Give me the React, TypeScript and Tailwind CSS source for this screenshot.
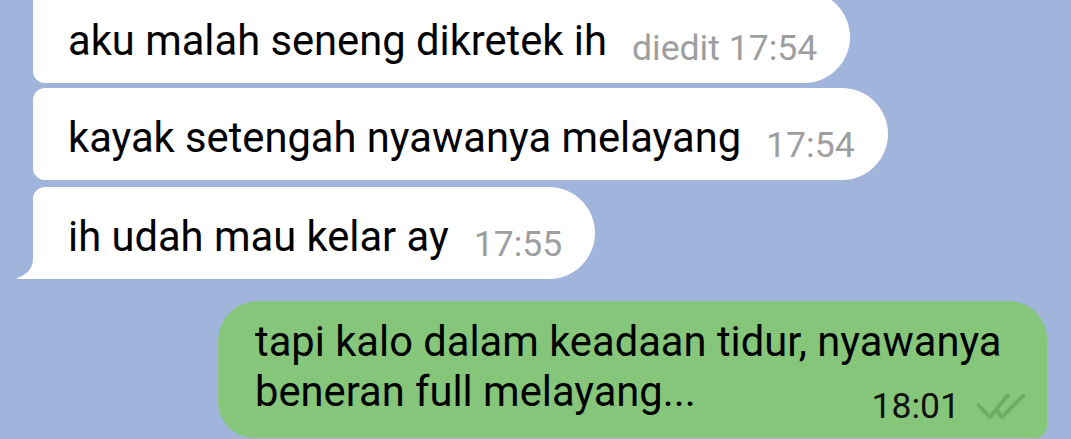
import React from "react";

function Time({ children }: { children: React.ReactNode }) {
  return (
    <span className="ml-[25px] shrink-0 text-[35.6px] leading-[35px] text-[#9e9e9e]">
      {children}
    </span>
  );
}

function Incoming({
  text,
  time,
  tail,
  className,
}: {
  text: string;
  time: string;
  tail?: boolean;
  className?: string;
}) {
  return (
    <div
      className={
        "relative ml-[33px] flex w-fit items-end bg-white pb-[17px] pl-[35px] pr-[33px] pt-[25px] " +
        (tail
          ? "rounded-tl-[12px] rounded-bl-none rounded-r-[46px] "
          : "rounded-l-[12px] rounded-r-[46px] ") +
        (className ?? "")
      }
    >
      <span className="whitespace-nowrap text-[41.7px] leading-[50px] text-black">{text}</span>
      <Time>{time}</Time>
      {tail && (
        <svg
          className="absolute bottom-0 left-[-17px]"
          width="18"
          height="30"
          viewBox="0 0 18 30"
        >
          <path d="M18 0 L17 0 L17 10 C17 20 10 26 1 29 Q0 30 2 30 L18 30 Z" fill="#ffffff" />
        </svg>
      )}
    </div>
  );
}

export default function App() {
  return (
    <div
      className="flex h-[439px] w-[1071px] flex-col overflow-hidden bg-[#a1b4dc]"
      style={{ fontFamily: "Roboto, 'Noto Sans', sans-serif" }}
    >
      <Incoming className="-mt-[9px]" text="aku malah seneng dikretek ih" time="diedit 17:54" />
      <Incoming className="mt-[5px]" text="kayak setengah nyawanya melayang" time="17:54" />
      <Incoming className="mt-[7px]" text="ih udah mau kelar ay" time="17:55" tail />

      <div className="ml-[218px] mt-[22px] w-[829px] shrink-0 rounded-tl-[40px] rounded-tr-[38px] rounded-br-[12px] rounded-bl-[36px] bg-[#85c67a] pb-[14px] pl-[37px] pr-[22px] pt-[16px]">
        <div className="text-[41.7px] leading-[50px] text-black">
          tapi kalo dalam keadaan tidur, nyawanya
          <br />
          beneran full melayang...
        </div>
        <div className="-mt-[28px] flex items-center justify-end">
          <span className="text-[35.6px] leading-[35px] text-[#111111]">18:01</span>
          <svg className="ml-[17px]" width="48" height="25" viewBox="0 0 48 25" fill="none">
            <path
              d="M1 11 L13 23 L31 1"
              stroke="#6aae63"
              strokeWidth="4"
              strokeLinecap="round"
              strokeLinejoin="round"
            />
            <path
              d="M21 18 L25 23 L47 1"
              stroke="#6aae63"
              strokeWidth="4"
              strokeLinecap="round"
              strokeLinejoin="round"
            />
          </svg>
        </div>
      </div>
    </div>
  );
}
